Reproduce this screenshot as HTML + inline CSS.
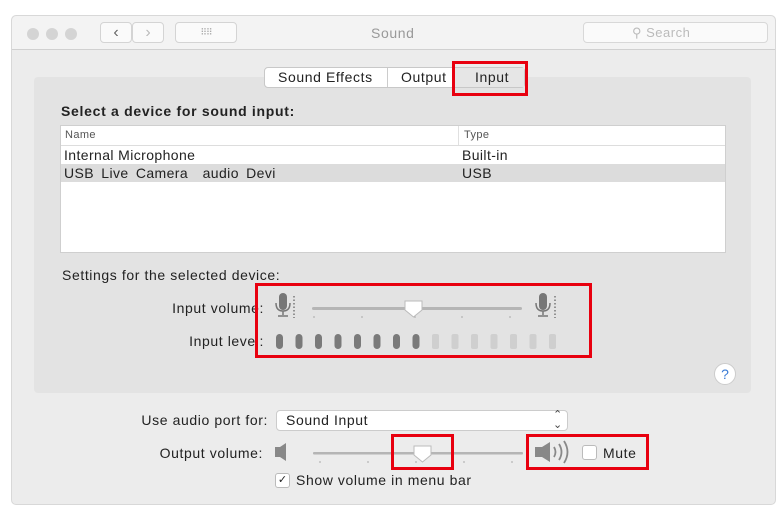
<!DOCTYPE html>
<html><head><style>
*{margin:0;padding:0;box-sizing:border-box}
body{width:784px;height:509px;background:#fff;font-family:"Liberation Sans",sans-serif;position:relative;overflow:hidden;color:#222}
.a{position:absolute}
.red{position:absolute;border:3px solid #e8000f}
.t{font-size:14px;letter-spacing:0.6px;white-space:nowrap}
.r{text-align:right}
</style></head><body>
<div class="a" style="left:11px;top:15px;width:765px;height:490px;background:#ececec;border:1px solid #d8d8d8;border-radius:5px"></div>
<div class="a" style="left:12px;top:16px;width:763px;height:34px;background:#f3f3f3;border-bottom:1px solid #d0d0d0;border-radius:5px 5px 0 0"></div>
<div class="a" style="left:27px;top:28px;width:12px;height:12px;border-radius:50%;background:#d4d4d4"></div>
<div class="a" style="left:46px;top:28px;width:12px;height:12px;border-radius:50%;background:#d4d4d4"></div>
<div class="a" style="left:65px;top:28px;width:12px;height:12px;border-radius:50%;background:#d4d4d4"></div>
<div class="a" style="left:100px;top:22px;width:32px;height:21px;background:#fafafa;border:1px solid #d4d4d4;border-radius:4px;font-size:16px;text-align:center;line-height:19px;color:#666">&#8249;</div>
<div class="a" style="left:132px;top:22px;width:32px;height:21px;background:#fafafa;border:1px solid #d4d4d4;border-radius:4px;font-size:16px;text-align:center;line-height:19px;color:#bbb">&#8250;</div>
<div class="a" style="left:175px;top:22px;width:62px;height:21px;background:#fafafa;border:1px solid #d4d4d4;border-radius:4px;font-size:9px;text-align:center;line-height:19px;color:#aaa;letter-spacing:-1px">⠿⠿</div>
<div class="a t" style="left:371px;top:25px;color:#999">Sound</div>
<div class="a" style="left:583px;top:22px;width:185px;height:21px;background:#fafafa;border:1px solid #d8d8d8;border-radius:4px;font-size:13px;color:#bbb;line-height:19px;padding-left:48px;letter-spacing:0.5px">&#9906; Search</div>
<div class="a" style="left:34px;top:77px;width:717px;height:316px;background:#e3e3e3;border-radius:4px"></div>
<div class="a" style="left:264px;top:67px;width:261px;height:21px;background:#fff;border:1px solid #c8c8c8;border-radius:4px"></div>
<div class="a" style="left:387px;top:68px;width:1px;height:19px;background:#ccc"></div>
<div class="a" style="left:455px;top:68px;width:69px;height:19px;background:#e6e6e6"></div>
<div class="a t" style="left:278px;top:69px">Sound Effects</div>
<div class="a t" style="left:401px;top:69px">Output</div>
<div class="a t" style="left:475px;top:69px">Input</div>
<div class="red" style="left:452px;top:61px;width:76px;height:35px"></div>
<div class="a t" style="left:61px;top:103px;font-weight:bold;letter-spacing:0.7px">Select a device for sound input:</div>
<div class="a" style="left:60px;top:125px;width:666px;height:128px;background:#fff;border:1px solid #cfcfcf"></div>
<div class="a" style="left:61px;top:145px;width:664px;height:1px;background:#ddd"></div>
<div class="a" style="left:458px;top:126px;width:1px;height:19px;background:#e0e0e0"></div>
<div class="a" style="left:61px;top:164px;width:664px;height:18px;background:#dcdcdc"></div>
<div class="a" style="left:65px;top:129px;font-size:11px;color:#555;letter-spacing:0.4px">Name</div>
<div class="a" style="left:464px;top:129px;font-size:11px;color:#555;letter-spacing:0.4px">Type</div>
<div class="a t" style="left:64px;top:147px;letter-spacing:0.4px">Internal Microphone</div>
<div class="a t" style="left:462px;top:147px;letter-spacing:0.4px">Built-in</div>
<div class="a t" style="left:64px;top:165px;word-spacing:3px;letter-spacing:0.4px">USB Live Camera &nbsp;audio Devi</div>
<div class="a t" style="left:462px;top:165px;letter-spacing:0.4px">USB</div>
<div class="a t" style="left:62px;top:267px">Settings for the selected device:</div>
<div class="a t r" style="left:100px;width:164px;top:300px">Input volume:</div>
<div class="a t r" style="left:100px;width:164px;top:333px">Input level:</div>
<svg class="a" style="left:270px;top:290px" width="300" height="36">
<g fill="#777"><rect x="9" y="3" width="8" height="17" rx="4"/><rect x="269" y="3" width="8" height="17" rx="4"/></g>
<g fill="none" stroke="#777" stroke-width="1.5"><path d="M6 13 q0 8 7 8 q7 0 7-8 M13 21 v4 M8 26 h10"/><path d="M266 13 q0 8 7 8 q7 0 7-8 M273 21 v4 M268 26 h10"/></g>
<g stroke="#777" stroke-width="1.5" stroke-dasharray="1.5 2"><path d="M24 6v22"/><path d="M285 6v22"/></g>
<rect x="42" y="17" width="210" height="3" rx="1.5" fill="#b5b5b5"/>
<g stroke="#aaa"><path d="M44 26v2M92 26v2M145 26v2M192 26v2M240 26v2"/></g>
<path d="M135 11h17v9l-8.5 7l-8.5-7z" fill="#fff" stroke="#bbb"/>
</svg>
<svg class="a" style="left:273px;top:333px" width="290" height="18">
<g fill="#7a7a7a"><rect x="3" y="1" width="7" height="15" rx="3.5"/><rect x="22.5" y="1" width="7" height="15" rx="3.5"/><rect x="42" y="1" width="7" height="15" rx="3.5"/><rect x="61.5" y="1" width="7" height="15" rx="3.5"/><rect x="81" y="1" width="7" height="15" rx="3.5"/><rect x="100.5" y="1" width="7" height="15" rx="3.5"/><rect x="120" y="1" width="7" height="15" rx="3.5"/><rect x="139.5" y="1" width="7" height="15" rx="3.5"/></g>
<g fill="#cfcfcf"><rect x="159" y="1" width="7" height="15" rx="2"/><rect x="178.5" y="1" width="7" height="15" rx="2"/><rect x="198" y="1" width="7" height="15" rx="2"/><rect x="217.5" y="1" width="7" height="15" rx="2"/><rect x="237" y="1" width="7" height="15" rx="2"/><rect x="256.5" y="1" width="7" height="15" rx="2"/><rect x="276" y="1" width="7" height="15" rx="2"/></g>
</svg>
<div class="red" style="left:255px;top:283px;width:337px;height:75px"></div>
<div class="a" style="left:714px;top:363px;width:22px;height:22px;border-radius:50%;background:#fff;border:1px solid #ccc;color:#3a7bd5;font-size:14px;text-align:center;line-height:20px">?</div>
<div class="a t r" style="left:100px;width:168px;top:412px">Use audio port for:</div>
<div class="a" style="left:276px;top:410px;width:292px;height:21px;background:#fff;border:1px solid #ccc;border-radius:4px"></div>
<div class="a t" style="left:286px;top:412px">Sound Input</div>
<div class="a" style="left:553px;top:410px;font-size:11px;color:#444;line-height:10px">&#8963;<br>&#8964;</div>
<div class="a t r" style="left:100px;width:163px;top:445px">Output volume:</div>
<svg class="a" style="left:270px;top:436px" width="310" height="34">
<path d="M5 11h5l6-4v18l-6-4h-5z" fill="#888"/>
<rect x="43" y="16" width="210" height="2.5" rx="1" fill="#b5b5b5"/>
<g stroke="#aaa"><path d="M50 25v2M98 25v2M146 25v2M194 25v2M242 25v2"/></g>
<path d="M144 10h17v9l-8.5 7l-8.5-7z" fill="#fff" stroke="#bbb"/>
<path d="M265 11h7l8-5v20l-8-5h-7z" fill="#888"/>
<g fill="none" stroke="#888" stroke-width="1.8"><path d="M284 11q3 5 0 10"/><path d="M289 8q5 8 0 16"/><path d="M294 5q7 11 0 22"/></g>
</svg>
<div class="a" style="left:582px;top:445px;width:15px;height:15px;background:#fff;border:1px solid #bbb;border-radius:3px"></div>
<div class="a t" style="left:603px;top:445px">Mute</div>
<div class="red" style="left:391px;top:434px;width:63px;height:36px"></div>
<div class="red" style="left:526px;top:434px;width:123px;height:36px"></div>
<div class="a" style="left:275px;top:473px;width:15px;height:15px;background:#fff;border:1px solid #bbb;border-radius:3px;font-size:11px;text-align:center;line-height:13px">&#10003;</div>
<div class="a t" style="left:296px;top:472px">Show volume in menu bar</div>
</body></html>
